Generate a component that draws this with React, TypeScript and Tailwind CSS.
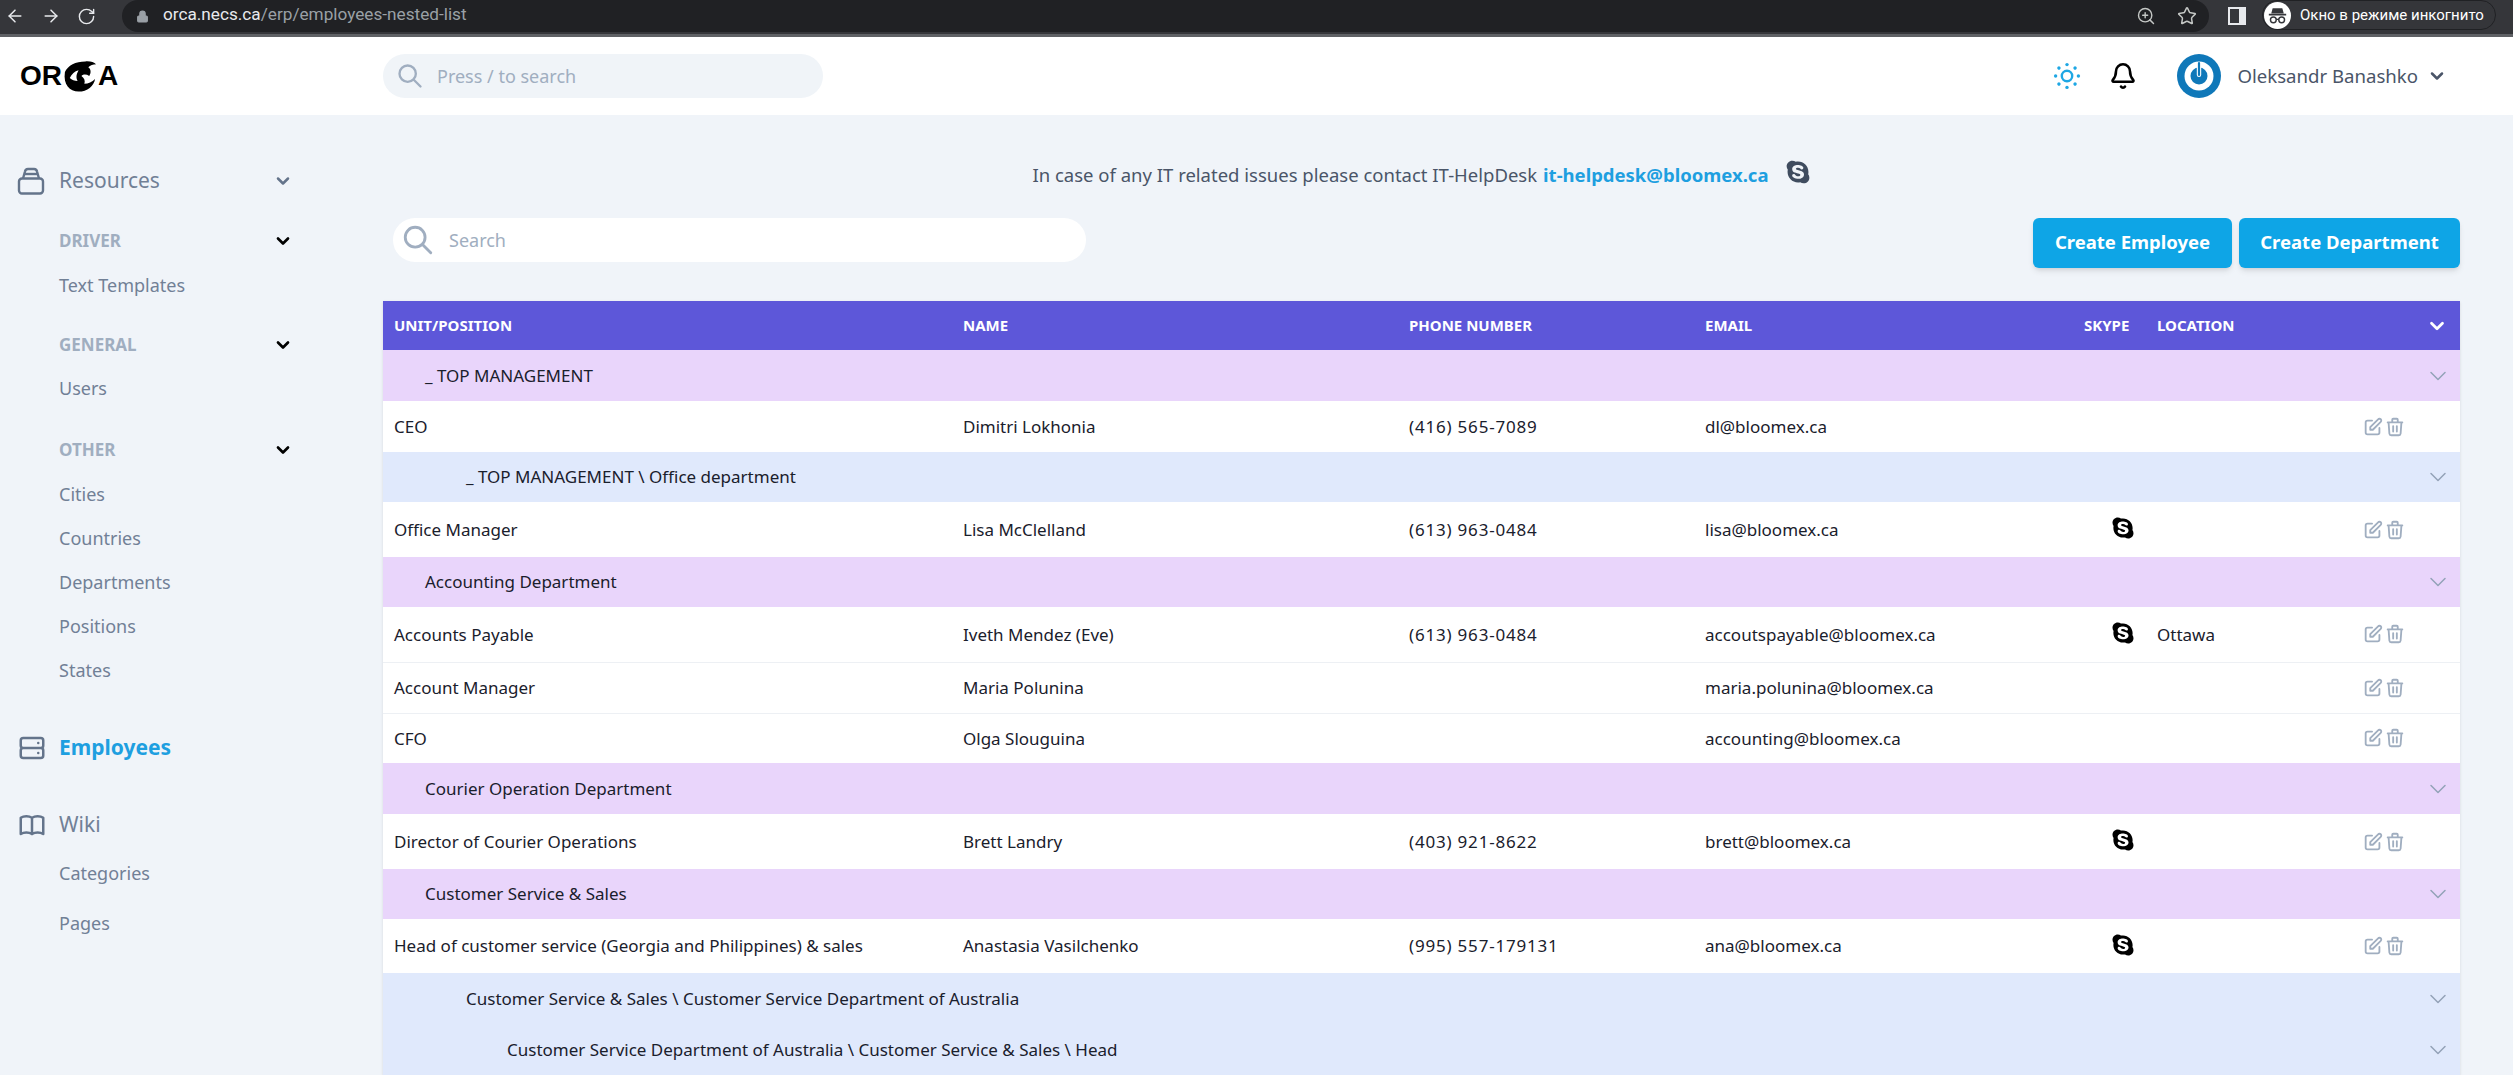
import { ArrowLeft, ArrowRight, RotateCw, Lock, Star, ZoomIn, ChevronDown, Bell } from "lucide-react";
import { FaSkype } from "react-icons/fa";
import {
  HiOutlineSearch,
  HiOutlineServer,
  HiOutlineBookOpen,
  HiOutlinePencilAlt,
  HiOutlineTrash,
} from "react-icons/hi";

type Row =
  | { kind: "group"; level: 1 | 2 | 3; title: string; h: string }
  | {
      kind: "person";
      unit: string;
      name: string;
      phone?: string;
      email: string;
      skype?: boolean;
      location?: string;
      h: string;
      line?: boolean;
    };

const rows: Row[] = [
  { kind: "group", level: 1, title: "_ TOP MANAGEMENT", h: "h-[51px]" },
  { kind: "person", unit: "CEO", name: "Dimitri Lokhonia", phone: "(416) 565-7089", email: "dl@bloomex.ca", h: "h-[51px]" },
  { kind: "group", level: 2, title: "_ TOP MANAGEMENT \\ Office department", h: "h-[50px]" },
  { kind: "person", unit: "Office Manager", name: "Lisa McClelland", phone: "(613) 963-0484", email: "lisa@bloomex.ca", skype: true, h: "h-[55px]" },
  { kind: "group", level: 1, title: "Accounting Department", h: "h-[50px]" },
  { kind: "person", unit: "Accounts Payable", name: "Iveth Mendez (Eve)", phone: "(613) 963-0484", email: "accoutspayable@bloomex.ca", skype: true, location: "Ottawa", h: "h-[55px]", line: true },
  { kind: "person", unit: "Account Manager", name: "Maria Polunina", email: "maria.polunina@bloomex.ca", h: "h-[51px]", line: true },
  { kind: "person", unit: "CFO", name: "Olga Slouguina", email: "accounting@bloomex.ca", h: "h-[50px]" },
  { kind: "group", level: 1, title: "Courier Operation Department", h: "h-[51px]" },
  { kind: "person", unit: "Director of Courier Operations", name: "Brett Landry", phone: "(403) 921-8622", email: "brett@bloomex.ca", skype: true, h: "h-[55px]" },
  { kind: "group", level: 1, title: "Customer Service & Sales", h: "h-[50px]" },
  { kind: "person", unit: "Head of customer service (Georgia and Philippines) & sales", name: "Anastasia Vasilchenko", phone: "(995) 557-179131", email: "ana@bloomex.ca", skype: true, h: "h-[54px]" },
  { kind: "group", level: 2, title: "Customer Service & Sales \\ Customer Service Department of Australia", h: "h-[51px]" },
  { kind: "group", level: 3, title: "Customer Service Department of Australia \\ Customer Service & Sales \\ Head", h: "h-[51px]" },
];

function Logo() {
  return (
    <div className="flex h-8 w-[98px] items-center font-['Liberation_Sans',sans-serif] text-[28px] leading-none font-bold text-black">
      <span>OR</span>
      <svg viewBox="0 0 37 33" className="h-[33px] w-[36px] shrink-0">
        <path
          d="M3 12C6 5 14 1 24 1c5-.5 9 1 11 3-3 0-6 1-8 3 3 2 3 6 1 9-3-2-6-2-8 0 3 2 4 5 3 8 4 0 8-2 11-5-1 7-8 13-17 13C8 32 1 25 3 12Z"
          fill="#000"
        />
        <path d="M8 18c2-4 5-7 9-8-2 4-3 7-1 11-3 0-6-1-8-3Z" fill="#fff" />
      </svg>
      <span>A</span>
    </div>
  );
}

function ResourcesIcon() {
  return (
    <svg viewBox="0 0 28 28" className="h-[28px] w-[28px] text-[#64748b]" fill="none" stroke="currentColor" strokeWidth="2.4" strokeLinejoin="round">
      <rect x="2" y="11.5" width="24" height="15" rx="3" />
      <path d="M6 11.5 8 4.5a3 3 0 0 1 3-2.5h6a3 3 0 0 1 3 2.5l2 7" />
      <path d="M7 7h14" />
    </svg>
  );
}

function SunDots() {
  const dots = [0, 45, 90, 135, 180, 225, 270, 315];
  return (
    <svg viewBox="0 0 28 28" className="h-7 w-7 text-[#1ea7e4]" fill="currentColor">
      <circle cx="14" cy="14" r="5.2" fill="none" stroke="currentColor" strokeWidth="2.4" />
      {dots.map((a) => (
        <circle key={a} cx="14" cy="2.6" r="1.7" transform={`rotate(${a} 14 14)`} />
      ))}
    </svg>
  );
}

function Avatar() {
  return (
    <svg viewBox="0 0 44 44" className="h-11 w-11 shrink-0">
      <circle cx="22" cy="22" r="22" fill="#0f78b9" />
      <circle cx="22" cy="22" r="14.5" fill="#fff" />
      <circle cx="22" cy="22" r="8.5" fill="#0f78b9" />
      <rect x="19.8" y="9" width="4.4" height="14" rx="2.2" fill="#fff" />
      <rect x="20.9" y="8" width="2.2" height="14" rx="1.1" fill="#0f78b9" />
    </svg>
  );
}

function IncognitoIcon() {
  return (
    <svg viewBox="0 0 28 28" className="h-[27px] w-[27px] shrink-0">
      <circle cx="14" cy="14" r="14" fill="#fff" />
      <path d="M9 6.5h10l1.5 5.5h-13Z" fill="#35363a" />
      <rect x="5" y="12.2" width="18" height="1.8" fill="#35363a" />
      <circle cx="9.7" cy="18.5" r="3" fill="none" stroke="#35363a" strokeWidth="1.5" />
      <circle cx="18.3" cy="18.5" r="3" fill="none" stroke="#35363a" strokeWidth="1.5" />
      <path d="M12.7 18h2.6" stroke="#35363a" strokeWidth="1.3" />
    </svg>
  );
}

function BrowserBar() {
  return (
    <div className="flex h-[37px] items-start border-b-[3px] border-[#5f6165] bg-[#35363a] font-['Roboto',sans-serif]">
      <div className="flex h-8 w-[122px] items-center gap-[16px] pl-[5px] text-[#e8eaed]">
        <ArrowLeft size={20} strokeWidth={1.8} />
        <ArrowRight size={20} strokeWidth={1.8} />
        <RotateCw size={19} strokeWidth={1.8} />
      </div>
      <div className="flex h-8 w-[2087px] items-center rounded-l-[17px] rounded-r-[17px] bg-[#202124] pl-[14px] text-[17.2px] text-[#e8eaed]">
        <Lock size={13} className="mr-[14px] fill-[#9aa0a6] text-[#9aa0a6]" />
        <span className="mb-[2px]">orca.necs.ca</span>
        <span className="mb-[2px] text-[#9aa0a6]">/erp/employees-nested-list</span>
        <div className="ml-auto flex items-center gap-[21px] pr-[12px] text-[#c4c7c5]">
          <ZoomIn size={20} strokeWidth={1.7} />
          <Star size={20} strokeWidth={1.8} />
        </div>
      </div>
      <div className="mt-[7px] ml-[19px] flex h-[18px] w-[18px] justify-end border-2 border-[#e8eaed] bg-[#35363a]">
        <div className="h-full w-[5px] bg-[#e8eaed]" />
      </div>
      <div className="ml-[16px] flex h-[30px] w-[234px] items-center gap-[9px] rounded-l-[15px] rounded-r-[15px] border border-[#202124] pl-[1px] text-[15px] text-white">
        <IncognitoIcon />
        <span className="whitespace-nowrap">Окно в режиме инкогнито</span>
      </div>
    </div>
  );
}

function TopHeader() {
  return (
    <header className="flex h-[78px] items-center bg-white">
      <div className="w-[383px] pl-[20px]">
        <Logo />
      </div>
      <div className="flex h-11 w-[440px] items-center rounded-full bg-[#f0f4f8] pl-[13px] text-[18px] text-[#a0aec0]">
        <HiOutlineSearch size={28} className="mr-[13px] text-[#a0aec0]" />
        Press / to search
      </div>
      <div className="ml-auto flex items-center pr-[66px]">
        <SunDots />
        <Bell size={28} strokeWidth={2.2} className="ml-[28px] text-black" />
        <div className="ml-[40px]">
          <Avatar />
        </div>
        <span className="ml-[16px] text-[18.6px] text-[#4a5568]">Oleksandr Banashko</span>
        <ChevronDown size={20} strokeWidth={3} className="ml-[9px] text-[#4a5568]" />
      </div>
    </header>
  );
}

function Section({ label, className }: { label: string; className: string }) {
  return (
    <div className={`flex h-8 items-center justify-between pl-[59px] text-[17px] font-bold text-[#a0aec0] ${className}`}>
      {label}
      <ChevronDown size={20} strokeWidth={3.2} className="text-black" />
    </div>
  );
}

function SideLink({ label, className }: { label: string; className: string }) {
  return <div className={`flex h-8 items-center pl-[59px] text-[18px] text-[#718096] ${className}`}>{label}</div>;
}

function Sidebar() {
  return (
    <aside className="w-[383px] shrink-0 pt-[46px]">
      <div className="w-[293px]">
        <div className="flex h-10 items-center justify-between pl-[17px] text-[21px] text-[#718096]">
          <span className="flex items-center gap-[14px]">
            <ResourcesIcon />
            Resources
          </span>
          <ChevronDown size={20} strokeWidth={3} className="text-[#64748b]" />
        </div>
        <Section label="DRIVER" className="mt-6" />
        <SideLink label="Text Templates" className="mt-3" />
        <Section label="GENERAL" className="mt-7" />
        <SideLink label="Users" className="mt-[11px]" />
        <Section label="OTHER" className="mt-[30px]" />
        <SideLink label="Cities" className="mt-3" />
        <SideLink label="Countries" className="mt-3" />
        <SideLink label="Departments" className="mt-3" />
        <SideLink label="Positions" className="mt-3" />
        <SideLink label="States" className="mt-3" />
        <div className="mt-[42px] flex h-10 items-center gap-[12px] pl-[17px] text-[21px] font-bold text-[#1e9fe0]">
          <HiOutlineServer size={30} className="text-[#64748b]" />
          Employees
        </div>
        <div className="mt-[37px] flex h-10 items-center gap-[12px] pl-[17px] text-[21px] text-[#718096]">
          <HiOutlineBookOpen size={30} className="text-[#64748b]" />
          Wiki
        </div>
        <SideLink label="Categories" className="mt-[12px]" />
        <SideLink label="Pages" className="mt-[18px]" />
      </div>
    </aside>
  );
}

function EmployeeRow({ row }: { row: Row }) {
  if (row.kind === "group") {
    const bg = row.level === 1 ? "bg-[#e9d5fb]" : "bg-[#e0e9fc]";
    const indent = row.level === 1 ? "pl-[42px]" : row.level === 2 ? "pl-[83px]" : "pl-[124px]";
    return (
      <tr className={`${row.h} ${bg}`}>
        <td colSpan={6} className={indent}>
          {row.title}
        </td>
        <td className="pr-[8px] text-right">
          <ChevronDown size={28} strokeWidth={1.3} className="ml-auto text-[#94a3b8]" />
        </td>
      </tr>
    );
  }
  return (
    <tr className={`${row.h} bg-white ${row.line ? "border-b border-[#edf0f4]" : ""}`}>
      <td className="pl-[11px]">{row.unit}</td>
      <td className="pl-[11px]">{row.name}</td>
      <td className="pl-[11px] tracking-[0.8px]">{row.phone}</td>
      <td className="pl-[11px]">{row.email}</td>
      <td className="pl-[38px]">{row.skype && <FaSkype size={24} className="mb-[3px] text-black" />}</td>
      <td className="pl-[11px]">{row.location}</td>
      <td>
        <div className="flex items-center pl-[9px] text-[#a0aec0]">
          <HiOutlinePencilAlt size={22} />
          <HiOutlineTrash size={22} />
        </div>
      </td>
    </tr>
  );
}

function EmployeeTable() {
  return (
    <table className="mt-[33px] w-[2077px] table-fixed border-collapse text-left text-[17px] text-[#1a202c] shadow-sm">
      <colgroup>
        <col className="w-[569px]" />
        <col className="w-[446px]" />
        <col className="w-[296px]" />
        <col className="w-[379px]" />
        <col className="w-[73px]" />
        <col className="w-[207px]" />
        <col className="w-[107px]" />
      </colgroup>
      <thead>
        <tr className="h-[49px] bg-[#5d57d9] text-[15px] font-bold text-white">
          <th className="pl-[11px]">UNIT/POSITION</th>
          <th className="pl-[11px]">NAME</th>
          <th className="pl-[11px]">PHONE NUMBER</th>
          <th className="pl-[11px]">EMAIL</th>
          <th className="pl-[11px]">SKYPE</th>
          <th className="pl-[11px]">LOCATION</th>
          <th className="pr-[12px]">
            <ChevronDown size={22} strokeWidth={3} className="ml-auto text-white" />
          </th>
        </tr>
      </thead>
      <tbody>
        {rows.map((r, i) => (
          <EmployeeRow key={i} row={r} />
        ))}
      </tbody>
    </table>
  );
}

export default function App() {
  return (
    <div className="flex h-[1075px] w-[2513px] flex-col overflow-hidden bg-[#f0f4f9] font-['Noto_Sans',sans-serif]">
      <BrowserBar />
      <TopHeader />
      <div className="flex min-h-0 flex-1">
        <Sidebar />
        <main className="w-[2077px] pt-[44px]">
          <div className="flex h-8 items-center justify-center text-[18.5px] text-[#4a5568]">
            In case of any IT related issues please contact IT-HelpDesk
            <span className="ml-[6px] font-bold text-[#1e9fe0]">it-helpdesk@bloomex.ca</span>
            <FaSkype size={26} className="mb-[6px] ml-[16px] text-[#3f4c5f]" />
          </div>
          <div className="mt-[27px] flex h-[50px] items-start">
            <div className="ml-[10px] flex h-11 w-[693px] items-center rounded-full bg-white pl-[8px] text-[18px] text-[#a0aec0]">
              <HiOutlineSearch size={34} className="mr-[14px]" />
              Search
            </div>
            <div className="ml-auto flex gap-[7px] text-[18.5px] font-bold text-white">
              <button className="h-[50px] w-[199px] rounded-md bg-[#0ea5e6] pb-[2px] shadow-md">Create Employee</button>
              <button className="h-[50px] w-[221px] rounded-md bg-[#0ea5e6] pb-[2px] shadow-md">Create Department</button>
            </div>
          </div>
          <EmployeeTable />
        </main>
      </div>
    </div>
  );
}
